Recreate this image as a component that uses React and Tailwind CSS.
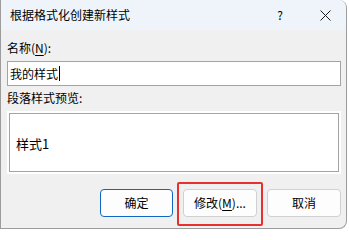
import React from "react"

const font = { fontFamily: '"Noto Sans CJK SC", "Noto Sans", sans-serif' }

const CloseIcon = () => (
  <svg width="11" height="11" viewBox="0 0 11 11" fill="none" stroke="#1a1a1a" strokeWidth="1">
    <line x1="0.5" y1="0.5" x2="10.5" y2="10.5" />
    <line x1="10.5" y1="0.5" x2="0.5" y2="10.5" />
  </svg>
)

export default function App() {
  return (
    <div className="w-[349px] h-[231px] bg-white overflow-hidden text-[12px] text-black" style={font}>
      <div className="w-[347px] h-[229px] bg-[#f0f0f0] border-l border-r border-b border-[#9c9c9c] rounded-tr-[8px] rounded-br-[8px] overflow-hidden flex flex-col">
        {/* title bar */}
        <div className="h-[30px] bg-[#eef4f9] flex items-center pl-[9px] shrink-0">
          <span className="text-[12px] leading-none">根据格式化创建新样式</span>
          <span className="ml-auto mr-[37px] text-[12px] leading-none">?</span>
          <span className="mr-[15px] flex items-center">
            <CloseIcon />
          </span>
        </div>

        <div className="flex flex-col pl-[6px] pr-[5px] relative flex-1">
          <div className="mt-[10px] h-[16px] leading-[16px]">
            名称(<span className="underline underline-offset-2">N</span>):
          </div>
          <div className="mt-[5px] h-[25px] bg-white border border-[#a3a3a3] flex items-center pl-[2px]">
            <span className="leading-none">我的样式</span>
            <span className="w-px h-[15px] bg-black ml-[1px]" />
          </div>
          <div className="mt-[4px] h-[16px] leading-[16px]">段落样式预览:</div>
          <div className="mt-[5px] bg-white p-[2px] h-[63px]">
            <div className="h-full border border-[#a3a3a3] bg-white flex items-center pl-[6px] pt-[2px]">
              <span className="text-[13px] leading-none">样式1</span>
            </div>
          </div>

          <div className="mt-[15px] flex justify-end gap-[10px]">
            <button className="w-[73px] h-[28px] bg-[#fdfdfd] border border-[#0f67c4] rounded-[4px] text-[12px]">
              确定
            </button>
            <button className="w-[74px] h-[28px] bg-[#fdfdfd] border border-[#d0d0d0] rounded-[4px] text-[12px]">
              修改(<span className="underline underline-offset-2">M</span>)...
            </button>
            <button className="w-[74px] h-[28px] bg-[#fdfdfd] border border-[#d0d0d0] rounded-[4px] text-[12px]">
              取消
            </button>
          </div>

          {/* highlight annotation */}
          <div className="absolute left-[176px] top-[152px] w-[86px] h-[44px] border-2 border-[#e8312f] rounded-[2px] pointer-events-none" />
        </div>
      </div>
    </div>
  )
}
